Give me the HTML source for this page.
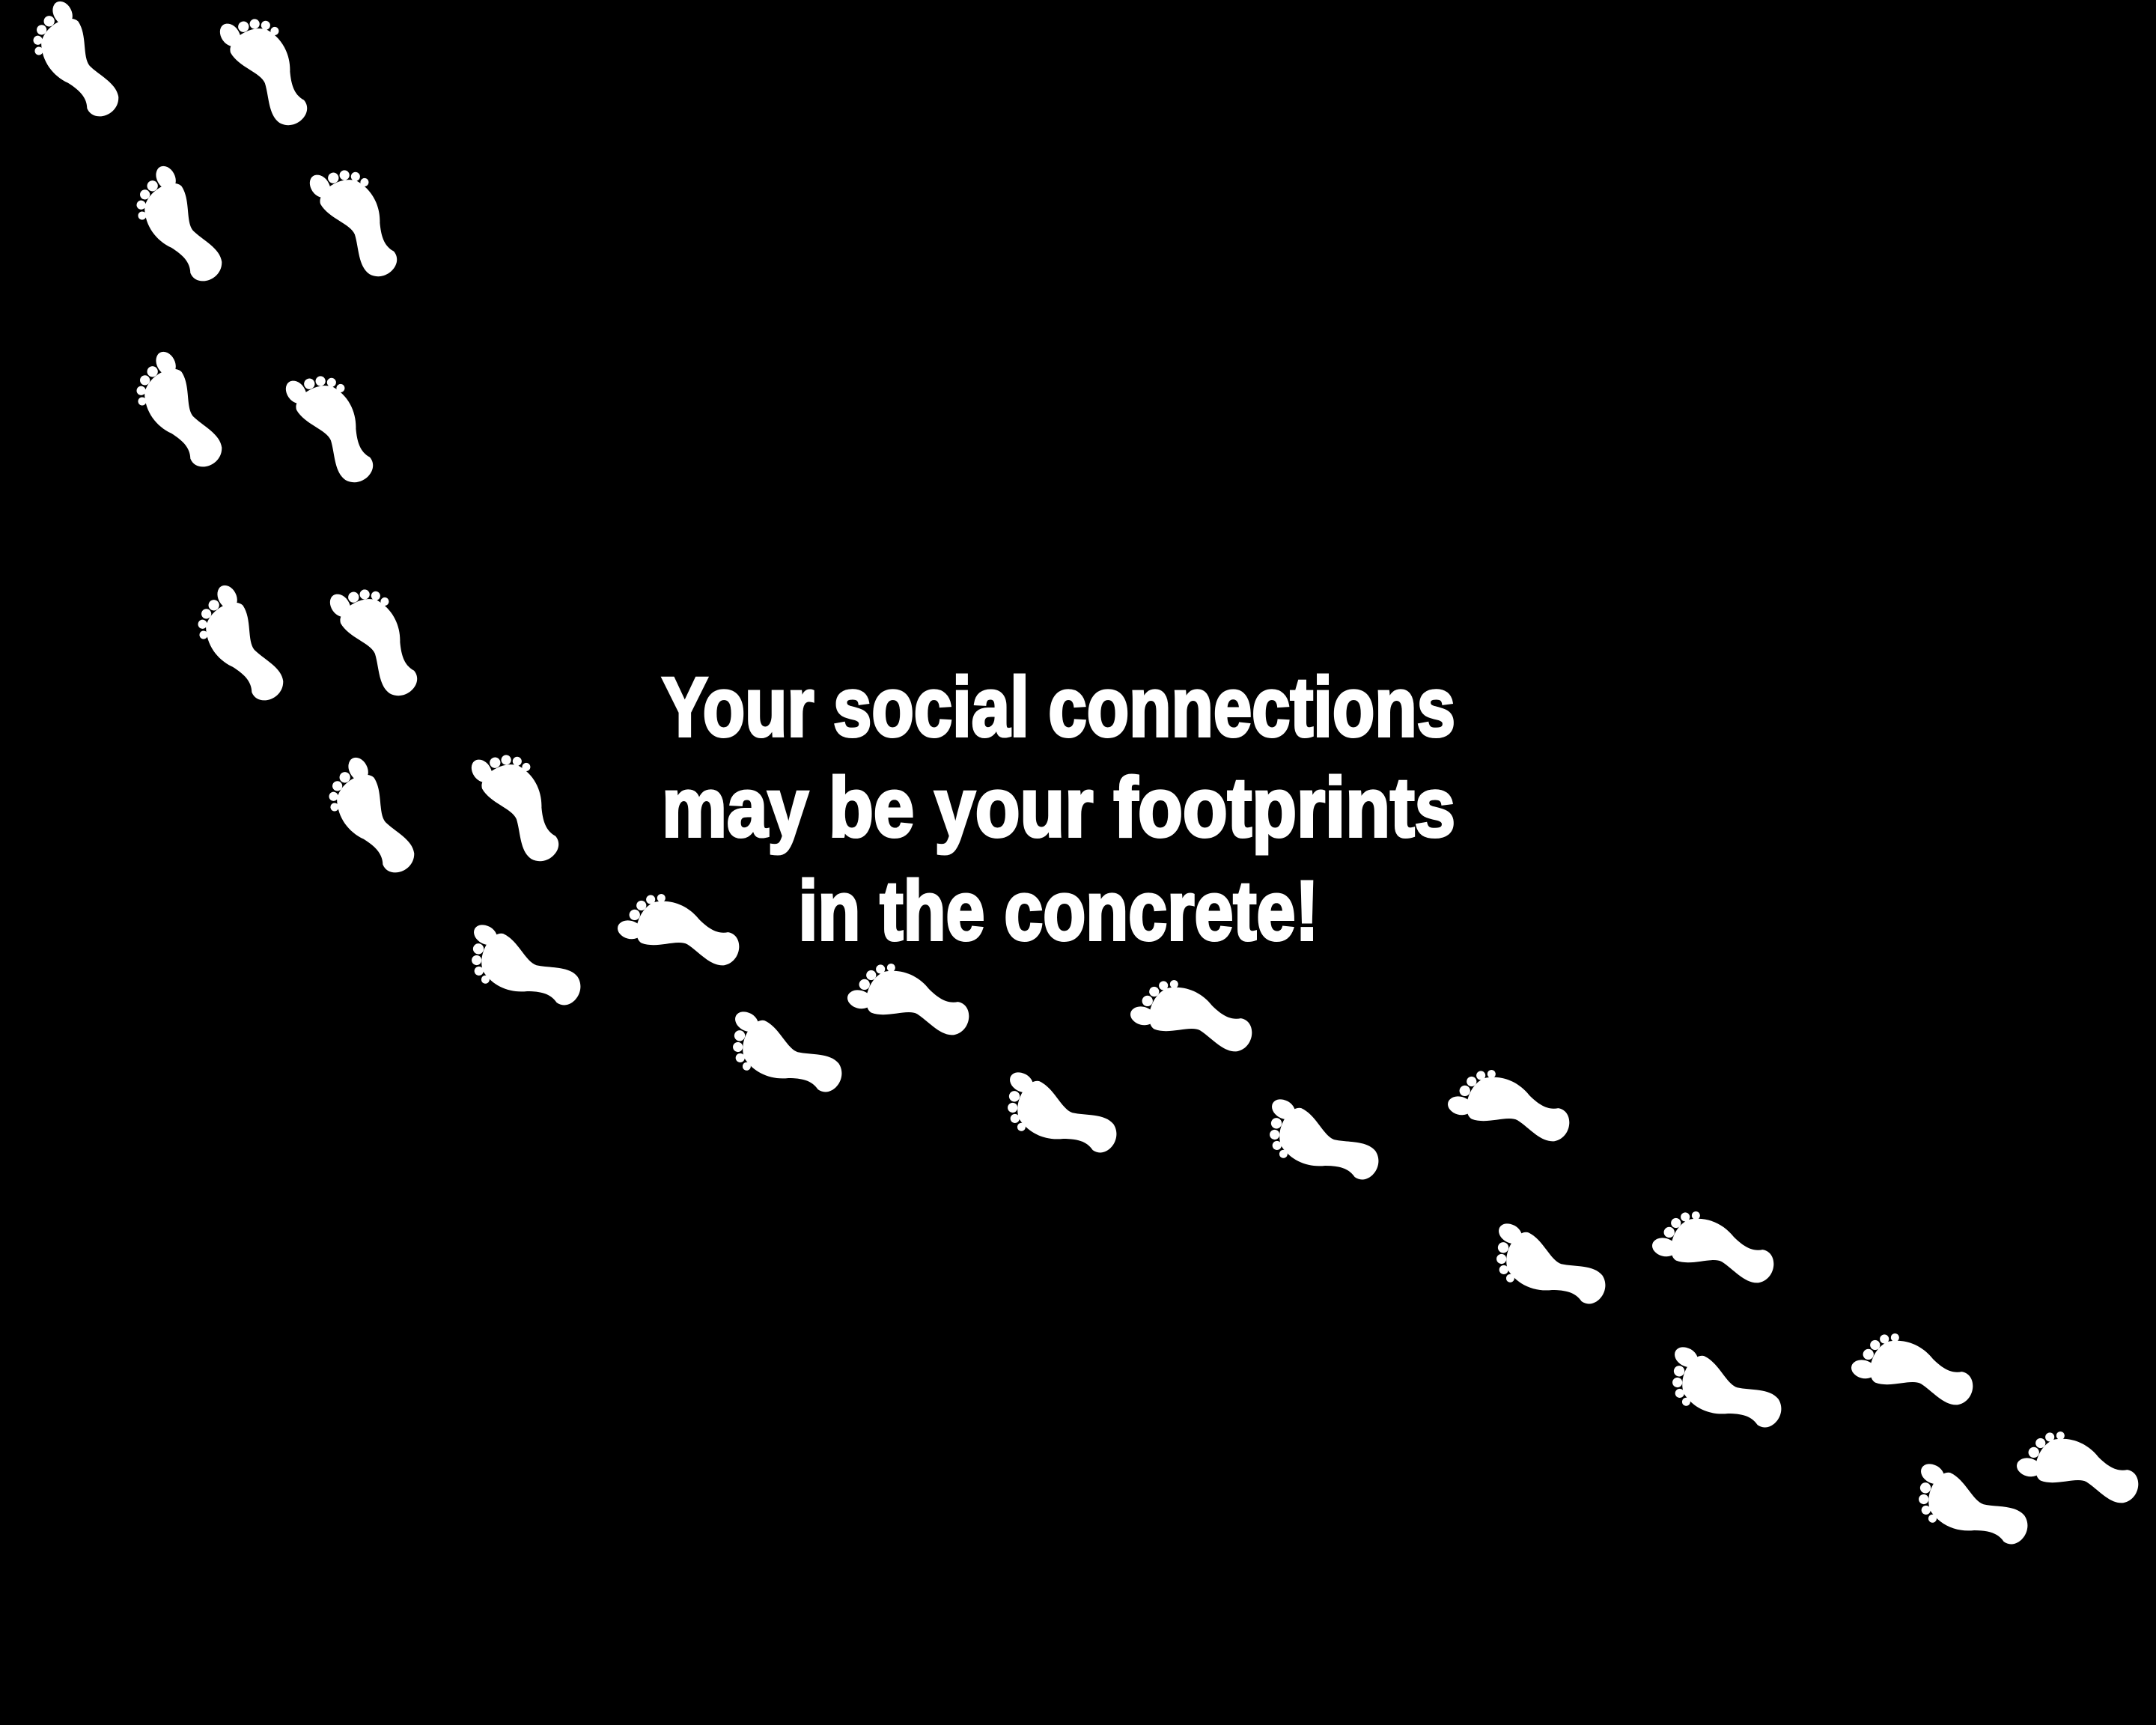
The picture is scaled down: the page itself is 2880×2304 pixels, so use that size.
<!DOCTYPE html>
<html><head><meta charset="utf-8"><style>
html,body{margin:0;padding:0;background:#000;}
svg{display:block}
</style></head><body>
<svg width="2880" height="2304" viewBox="0 0 2880 2304" xmlns="http://www.w3.org/2000/svg">
<rect width="2880" height="2304" fill="#000"/>
<defs>
<g id="f" fill="#fff" transform="scale(1.1)">
<path d="M-26,-40 C-36,-20 -32,2 -20,18 C-12,32 -8,44 -14,56 C-16,76 16,82 26,62 C32,46 18,28 13,12 C10,-2 28,-22 26,-42 C22,-56 -12,-58 -26,-40 Z"/>
<ellipse cx="14" cy="-60" rx="11" ry="15"/>
<circle cx="-5" cy="-59" r="6.5"/>
<circle cx="-18" cy="-54" r="6"/>
<circle cx="-28" cy="-45" r="5.5"/>
<circle cx="-33" cy="-33" r="5"/>
</g>
</defs>
<use href="#f" transform="translate(101,83) rotate(-28)"/>
<use href="#f" transform="translate(358,92) rotate(-35) scale(-1,1)"/>
<use href="#f" transform="translate(239,303) rotate(-28)"/>
<use href="#f" transform="translate(478,294) rotate(-35) scale(-1,1)"/>
<use href="#f" transform="translate(239,551) rotate(-28)"/>
<use href="#f" transform="translate(446,569) rotate(-35) scale(-1,1)"/>
<use href="#f" transform="translate(321,863) rotate(-28)"/>
<use href="#f" transform="translate(505,854) rotate(-35) scale(-1,1)"/>
<use href="#f" transform="translate(496,1093) rotate(-28)"/>
<use href="#f" transform="translate(694,1075) rotate(-35) scale(-1,1)"/>
<use href="#f" transform="translate(698,1295) rotate(-60)"/>
<use href="#f" transform="translate(909,1244) rotate(-75) scale(-1,1)"/>
<use href="#f" transform="translate(1047,1411) rotate(-60)"/>
<use href="#f" transform="translate(1216,1337) rotate(-75) scale(-1,1)"/>
<use href="#f" transform="translate(1414,1492) rotate(-60)"/>
<use href="#f" transform="translate(1594,1359) rotate(-75) scale(-1,1)"/>
<use href="#f" transform="translate(1764,1528) rotate(-60)"/>
<use href="#f" transform="translate(2018,1479) rotate(-75) scale(-1,1)"/>
<use href="#f" transform="translate(2067,1694) rotate(-60)"/>
<use href="#f" transform="translate(2291,1668) rotate(-75) scale(-1,1)"/>
<use href="#f" transform="translate(2302,1859) rotate(-60)"/>
<use href="#f" transform="translate(2557,1831) rotate(-75) scale(-1,1)"/>
<use href="#f" transform="translate(2631,2015) rotate(-60)"/>
<use href="#f" transform="translate(2778,1962) rotate(-75) scale(-1,1)"/>
<g font-family="Liberation Sans, sans-serif" font-weight="bold" font-size="112" fill="#fff" stroke="#fff" stroke-width="4" text-anchor="middle">
<text x="1414" y="983" textLength="1060" lengthAdjust="spacingAndGlyphs">Your social connections</text>
<text x="1414" y="1117" textLength="1060" lengthAdjust="spacingAndGlyphs">may be your footprints</text>
<text x="1414" y="1255" textLength="695" lengthAdjust="spacingAndGlyphs">in the concrete!</text>
</g>
</svg>
</body></html>
